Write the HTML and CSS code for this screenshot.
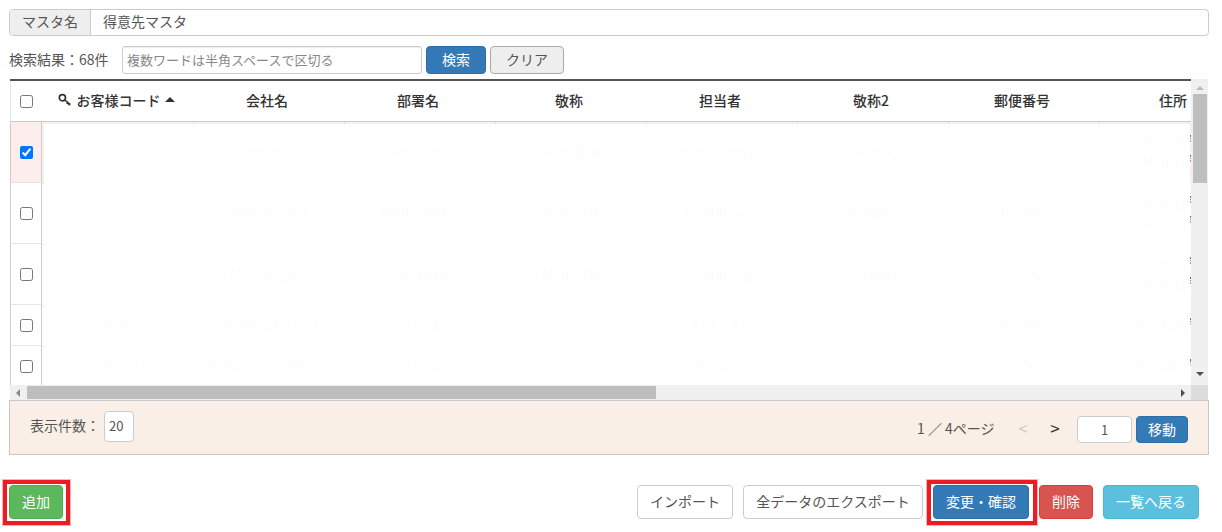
FILE: index.html
```html
<!DOCTYPE html>
<html lang="ja">
<head>
<meta charset="utf-8">
<title>得意先マスタ</title>
<link rel="stylesheet" href="styles.css">
</head>
<body>
<main class="page">
  <div class="master">
    <span class="master-label">マスタ名</span>
    <span class="master-value">得意先マスタ</span>
  </div>
  <div class="search">
    <span class="result">検索結果：68件</span>
    <input class="search-input" type="text" placeholder="複数ワードは半角スペースで区切る">
    <button class="btn btn-primary btn-search">検索</button>
    <button class="btn btn-gray btn-clear">クリア</button>
  </div>
  <section class="panel">
    <div class="main">
      <div class="scroll">
        <table class="grid">
          <colgroup><col class="c-check"><col class="c-data"><col class="c-data"><col class="c-data"><col class="c-data"><col class="c-data"><col class="c-data"><col class="c-data"><col class="c-data"></colgroup>
          <thead>
            <tr>
              <th class="check"><input type="checkbox"></th>
              <th><span class="code-head"><svg class="key" viewBox="0 0 14 14" width="14" height="14"><circle cx="4.4" cy="4.8" r="3.1" fill="none" stroke="#333" stroke-width="1.7"/><path d="M6.8 7 12.4 11.6M9.8 9.4 8.8 11M11.6 11 10.6 12.4" fill="none" stroke="#333" stroke-width="1.6"/></svg>お客様コード<i class="caret"></i></span></th>
              <th>会社名</th><th>部署名</th><th>敬称</th><th>担当者</th><th>敬称2</th><th>郵便番号</th><th>住所</th>
            </tr>
          </thead>
          <tbody>
            <tr class="selected tall">
              <td class="check"><input type="checkbox" checked></td>
              <td>1</td><td>API用会社名1</td><td>API用部署名1</td><td>API用敬称</td><td>API用担当者1</td><td>API用1</td><td>4570001</td><td class="addr">API用住所1<br>API用住所1</td>
            </tr>
            <tr class="tall">
              <td class="check"><input type="checkbox"></td>
              <td>2</td><td>API用会社名2</td><td>API用部署名2</td><td>API用敬称</td><td>API用担当者2</td><td>API用敬称2</td><td>4570002</td><td class="addr">API用住所2<br>API用住所2</td>
            </tr>
            <tr class="tall">
              <td class="check"><input type="checkbox"></td>
              <td>3</td><td>API用会社名3</td><td>API用部署名3</td><td>API用敬称</td><td>API用担当者3</td><td>API用敬称2</td><td>4570003</td><td class="addr">API用住所3<br>API用住所3</td>
            </tr>
            <tr class="short">
              <td class="check"><input type="checkbox"></td>
              <td>98765</td><td>SAMPLE株式会社</td><td>営業部</td><td></td><td>上田　太郎</td><td></td><td>4610005</td><td class="addr">名古屋市東区</td>
            </tr>
            <tr class="short">
              <td class="check"><input type="checkbox"></td>
              <td>100010</td><td>APIあいうえお株式会社</td><td>仕入部</td><td></td><td>田中浩二</td><td></td><td>103-0001</td><td class="addr">東京都中央区</td>
            </tr>
          </tbody>
        </table>
      </div>
      <div class="vbar">
        <i class="arrow arrow-up"></i>
        <div class="vthumb"></div>
        <i class="arrow arrow-down"></i>
      </div>
    </div>
    <div class="hbar">
      <div class="htrack">
        <i class="arrow arrow-left"></i>
        <div class="hthumb"></div>
        <i class="arrow arrow-right"></i>
      </div>
      <div class="corner"></div>
    </div>
    <div class="foot">
      <div class="per-page">
        <span>表示件数：</span>
        <select class="per-select"><option>20</option></select>
      </div>
      <div class="pager">
        <span class="pages">1 ／ 4ページ</span>
        <span class="nav nav-off">&lt;</span>
        <span class="nav">&gt;</span>
        <input class="page-input" type="text" value="1">
        <button class="btn btn-primary btn-move">移動</button>
      </div>
    </div>
  </section>
  <div class="actions">
    <button class="btn btn-success btn-add framed">追加</button>
    <div class="actions-right">
      <button class="btn btn-white btn-import">インポート</button>
      <button class="btn btn-white btn-export">全データのエクスポート</button>
      <button class="btn btn-primary btn-change framed">変更・確認</button>
      <button class="btn btn-danger btn-delete">削除</button>
      <button class="btn btn-info btn-back">一覧へ戻る</button>
    </div>
  </div>
</main>
</body>
</html>
```
FILE: styles.css
```css
* { box-sizing: border-box; }
html, body { margin: 0; padding: 0; background: #fff; }
body {
  font-family: "Noto Sans CJK JP", "Noto Sans", sans-serif;
  font-size: 14px;
  color: #555;
  overflow: hidden;
}
.page { width: 1222px; height: 532px; padding: 9px 13px 0 9px; }

.master {
  display: flex;
  height: 27px;
  border: 1px solid #ccc;
  border-radius: 4px;
  line-height: 22px;
}
.master-label {
  width: 81px;
  background: #eee;
  border-right: 1px solid #ccc;
  border-radius: 3px 0 0 3px;
  text-align: center;
}
.master-value { padding-left: 12px; }

.search { display: flex; align-items: center; height: 28px; margin-top: 10px; }
.result { width: 113px; padding-bottom: 2px; }
.search-input {
  width: 300px;
  height: 28px;
  padding: 0 4px 2px;
  border: 1px solid #ccc;
  border-radius: 3px;
  font: 13px "Noto Sans CJK JP", sans-serif;
  color: #555;
  box-shadow: inset 0 1px 1px rgba(0,0,0,.075);
}
.search-input::placeholder { color: #888; }

.btn {
  display: block;
  position: relative;
  padding: 0 0 2px;
  border: 1px solid transparent;
  border-radius: 4px;
  font: 14px "Noto Sans CJK JP", sans-serif;
  text-align: center;
  cursor: pointer;
}
.btn-primary { background: #337ab7; border-color: #2e6da4; color: #fff; }
.btn-success { background: #5cb85c; border-color: #4cae4c; color: #fff; }
.btn-danger { background: #d9534f; border-color: #d43f3a; color: #fff; }
.btn-info { background: #5bc0de; border-color: #46b8da; color: #fff; }
.btn-white { background: #fff; border-color: #ccc; color: #555; }
.btn-gray { background: #eee; border-color: #aaa; color: #555; }
.btn-search { width: 60px; height: 28px; margin-left: 4px; }
.btn-clear { width: 74px; height: 28px; margin-left: 4px; }

.panel { margin-top: 5px; }
.main { display: flex; height: 306px; margin-right: 1px; }
.scroll {
  flex: 1;
  min-width: 0;
  margin-left: 1px;
  border-top: 2px solid #555;
  overflow: hidden;
}
.grid { width: 1240px; table-layout: fixed; border-collapse: separate; border-spacing: 0; }
.c-check { width: 32px; }
.c-data { width: 151px; }
.grid th {
  height: 41px;
  padding: 0 3px 2px 0;
  border-bottom: 1px solid #ccc;
  color: #333;
  font-weight: 500;
  font-size: 14px;
  text-align: center;
}
.grid th.check { padding: 0; border-left: 1px solid #e6e6e6; }
.grid td {
  padding: 0 0 2px;
  color: #fdfdfd;
  font-size: 13px;
  line-height: 20px;
  text-align: center;
}
.grid td.check {
  padding: 0 0 0 1px;
  border-left: 1px solid #ccc;
  border-right: 1px solid #ccc;
  border-bottom: 1px solid #e6e6e6;
}
.grid td:nth-child(2) { background: linear-gradient(#e4e4e4, #e4e4e4) 0 0 / 2px 1px no-repeat; }
.grid input[type="checkbox"] { display: block; width: 13px; height: 13px; margin: 0 auto; }
.tall td { height: 61px; }
.short td { height: 41px; }
.selected td { background: linear-gradient(#ddd, #ddd) 0 0 / 1px 2px no-repeat, linear-gradient(#fdeeee, #fdeeee) 0 0 / 100% 2px no-repeat; }
.selected td:nth-child(2) { background: linear-gradient(#fdeeee, #fdeeee) 0 0 / 100% 2px no-repeat, linear-gradient(#fdeeee, #fdeeee) 0 0 / 2px 100% no-repeat; }
.selected td.check { background: #fdeeee; }

.grid .addr {
  background: linear-gradient(#666, #aaa) 91px 13px / 1px 7px no-repeat,
              linear-gradient(#666, #aaa) 91px 33px / 1px 7px no-repeat;
}
.short .addr { background: linear-gradient(#666, #aaa) 91px 13px / 1px 7px no-repeat; }
.selected .addr {
  background: linear-gradient(#666, #aaa) 91px 13px / 1px 7px no-repeat,
              linear-gradient(#666, #aaa) 91px 33px / 1px 7px no-repeat,
              linear-gradient(#ddd, #ddd) 0 0 / 1px 2px no-repeat,
              linear-gradient(#fdeeee, #fdeeee) 0 0 / 100% 2px no-repeat,
              linear-gradient(#fdeeee, #fdeeee) 91px 0 / 1px 100% no-repeat;
}

.vbar {
  display: flex;
  flex-direction: column;
  align-items: center;
  width: 17px;
  background: #f0f0f0;
}
.vthumb { width: 14px; height: 89px; margin-top: 4px; background: #bebebe; }
.arrow { display: block; width: 0; height: 0; border: solid transparent; }
.arrow-up { margin-top: 7px; border-width: 0 4px 4px; border-bottom-color: #bbb; }
.arrow-down { margin-top: auto; margin-bottom: 9px; border-width: 4px 4px 0; border-top-color: #505050; }
.arrow-left { margin-left: 6px; border-width: 4px 4px 4px 0; border-right-color: #888; }
.arrow-right { margin-left: auto; margin-right: 6px; border-width: 4px 0 4px 4px; border-left-color: #505050; }

.hbar { display: flex; height: 15px; margin-left: 1px; margin-right: 1px; }
.htrack { display: flex; align-items: center; flex: 1; background: #f0f0f0; }
.hthumb { width: 629px; height: 13px; margin-left: 7px; background: #bebebe; }
.corner { width: 17px; background: #dcdcdc; }

.foot {
  display: flex;
  justify-content: space-between;
  height: 55px;
  padding: 10px 20px 0 20px;
  background: #f9efe6;
  border: 1px solid #c8c8c8;
}
.per-page { display: flex; align-items: center; gap: 4px; height: 31px; }
.per-page span { padding-bottom: 3px; }
.per-select {
  appearance: none;
  width: 30px;
  height: 31px;
  padding: 0 4px 2px;
  border: 1px solid #ccc;
  border-radius: 4px;
  background: #fff;
  color: #555;
  font: 13px "Noto Sans CJK JP", sans-serif;
}
.pager { display: flex; align-items: center; height: 27px; margin-top: 5px; }
.pages { width: 90px; padding-bottom: 3px; }
.nav { width: 32px; padding-bottom: 4px; font-size: 17px; color: #333; text-align: center; }
.nav-off { color: #ccc; }
.page-input {
  width: 55px;
  height: 27px;
  margin-left: 6px;
  border: 1px solid #ccc;
  border-radius: 4px;
  font: 13px "Noto Sans CJK JP", sans-serif;
  color: #555;
  text-align: center;
}
.btn-move { width: 52px; height: 27px; margin-left: 4px; }

.actions { display: flex; justify-content: space-between; margin-top: 30px; padding-right: 10px; }
.actions-right { display: flex; gap: 10px; }
.actions .btn { height: 34px; }
.btn-add { width: 54px; }
.btn-import { width: 96px; }
.btn-export { width: 180px; }
.btn-change { width: 96px; }
.btn-delete { width: 54px; }
.btn-back { width: 96px; }
.framed::after {
  content: "";
  position: absolute;
  inset: -7px -9px -8px -8px;
  border: 5px solid #ed1c24;
  outline: 1px solid #f7b5b7;
  outline-offset: -1px;
}
.btn-change::after { right: -10px; }

.code-head { display: inline-flex; align-items: center; }
.key { margin-right: 5px; }
.caret {
  width: 0;
  height: 0;
  margin-left: 4px;
  border: solid transparent;
  border-width: 0 5px 5px;
  border-bottom-color: #333;
}
```
